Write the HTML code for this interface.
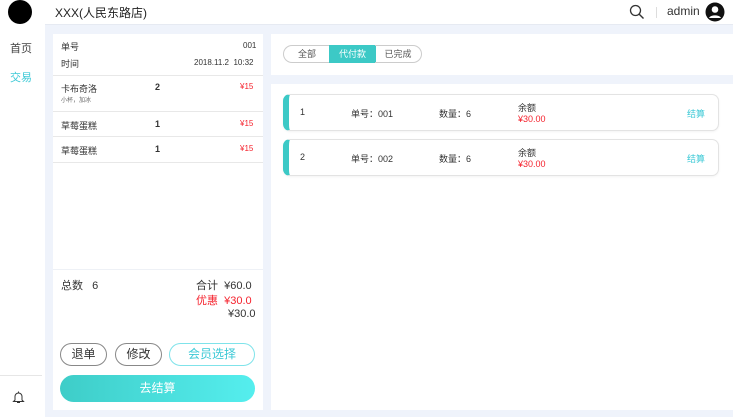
<!DOCTYPE html>
<html><head><meta charset="utf-8"><style>
*{margin:0;padding:0;box-sizing:border-box}
body{width:733px;height:417px;background:#eff3fb;font-family:"Liberation Sans","Noto Sans CJK SC",sans-serif;position:relative;overflow:hidden;color:#333}
.a{position:absolute}
.side{left:0;top:0;width:45px;height:417px;background:#fff}
.hdr{left:45px;top:0;width:688px;height:25px;background:#fff;border-bottom:1px solid #e6eaf2}
.lp{left:53px;top:34px;width:210px;height:376px;background:#fff}
.rt{left:271px;top:34px;width:462px;height:41px;background:#fff}
.rl{left:271px;top:84px;width:462px;height:326px;background:#fff}
.t{font-size:9px;white-space:nowrap}
.ln{height:1px;background:#e8e8e8}
.red{color:#f5222d}
.tab{top:45px;height:18px;font-size:9px;text-align:center;line-height:16px;border:1px solid #ccc;color:#555}
.card{left:283px;width:436px;height:37px;border:1px solid #e3e3e3;border-radius:7px;border-left:6px solid #3cc9c6;background:#fff;box-shadow:0 1px 2px rgba(0,0,0,.05)}
.btn{top:343px;height:23px;border:1px solid #888;border-radius:12px;text-align:center;line-height:21px;font-size:12px}
</style></head><body>
<div class="a side"></div>
<div class="a" style="left:8px;top:0;width:24px;height:24px;border-radius:50%;background:#000"></div>
<div class="a t" style="left:10px;top:40px;font-size:11px;color:#444">首页</div>
<div class="a t" style="left:10px;top:69px;font-size:11px;color:#3cc9d6">交易</div>
<div class="a" style="left:0;top:375px;width:42px;height:1px;background:#e6e6e6"></div>
<svg class="a" style="left:12px;top:390px" width="13" height="14" viewBox="0 0 13 14"><path d="M6.5 1.5v1M3 10V6.5a3.5 3.5 0 0 1 7 0V10l1.5 1.5h-10z M5 12.5h3" fill="none" stroke="#333" stroke-width="1"/></svg>
<div class="a hdr"></div>
<div class="a t" style="left:55px;top:4px;font-size:12px;color:#222">XXX(人民东路店)</div>
<svg class="a" style="left:629px;top:4px" width="16" height="16" viewBox="0 0 16 16"><circle cx="6.5" cy="6.5" r="5" fill="none" stroke="#333" stroke-width="1.3"/><path d="M10 10l4.5 4.5" stroke="#333" stroke-width="1.4"/></svg>
<div class="a" style="left:656px;top:7px;width:1px;height:11px;background:#ddd"></div>
<div class="a t" style="left:667px;top:4px;font-size:12px;color:#333">admin</div>
<svg class="a" style="left:705px;top:2px" width="20" height="20" viewBox="0 0 20 20"><circle cx="10" cy="10" r="9.5" fill="#111"/><circle cx="10" cy="7.5" r="3.3" fill="#fff"/><path d="M4 16c1.5-3.5 10.5-3.5 12 0" fill="#fff"/></svg>

<div class="a lp"></div>
<div class="a t" style="left:61px;top:40px">单号</div>
<div class="a t" style="left:243px;top:41px;font-size:8px">001</div>
<div class="a t" style="left:61px;top:57px">时间</div>
<div class="a t" style="left:194px;top:58px;font-size:8px">2018.11.2&nbsp; 10:32</div>
<div class="a ln" style="left:53px;top:75px;width:210px"></div>
<div class="a t" style="left:61px;top:82px">卡布奇洛</div>
<div class="a t" style="left:61px;top:95px;font-size:6px;color:#666">小杯，加冰</div>
<div class="a t" style="left:155px;top:82px;font-weight:bold">2</div>
<div class="a t red" style="left:240px;top:82px;font-size:8px">¥15</div>
<div class="a ln" style="left:53px;top:111px;width:210px"></div>
<div class="a t" style="left:61px;top:119px">草莓蛋糕</div>
<div class="a t" style="left:155px;top:119px;font-weight:bold">1</div>
<div class="a t red" style="left:240px;top:119px;font-size:8px">¥15</div>
<div class="a ln" style="left:53px;top:136px;width:210px"></div>
<div class="a t" style="left:61px;top:144px">草莓蛋糕</div>
<div class="a t" style="left:155px;top:144px;font-weight:bold">1</div>
<div class="a t red" style="left:240px;top:144px;font-size:8px">¥15</div>
<div class="a ln" style="left:53px;top:162px;width:210px"></div>
<div class="a ln" style="left:53px;top:269px;width:210px;background:#eef1f6"></div>
<div class="a t" style="left:61px;top:277px;font-size:11px">总数&nbsp;&nbsp; 6</div>
<div class="a t" style="left:196px;top:277px;font-size:11px">合计&nbsp; ¥60.0</div>
<div class="a t red" style="left:196px;top:292px;font-size:11px">优惠&nbsp; ¥30.0</div>
<div class="a t" style="left:228px;top:308px;font-size:11px">¥30.0</div>
<div class="a btn" style="left:60px;width:47px">退单</div>
<div class="a btn" style="left:115px;width:47px">修改</div>
<div class="a btn" style="left:169px;width:86px;border-color:#7fe3ea;color:#3cc9d6">会员选择</div>
<div class="a" style="left:60px;top:375px;width:195px;height:27px;border-radius:14px;background:linear-gradient(90deg,#3ecdc8,#55eeee);color:#fff;font-size:12px;text-align:center;line-height:27px">去结算</div>

<div class="a rt"></div>
<div class="a tab" style="left:283px;width:47px;border-radius:9px 0 0 9px;border-right:none">全部</div>
<div class="a tab" style="left:329px;width:47px;background:#3cc9c6;border-color:#3cc9c6;color:#fff">代付款</div>
<div class="a tab" style="left:375px;width:47px;border-radius:0 9px 9px 0;border-left:none">已完成</div>
<div class="a rl"></div>
<div class="a card" style="top:94px"></div>
<div class="a card" style="top:139px"></div>
<div class="a t" style="left:300px;top:107px">1</div>
<div class="a t" style="left:351px;top:107px">单号：001</div>
<div class="a t" style="left:439px;top:107px">数量：6</div>
<div class="a t" style="left:518px;top:101px">余额</div>
<div class="a t red" style="left:518px;top:114px">¥30.00</div>
<div class="a t" style="left:687px;top:107px;color:#3cc9d6">结算</div>
<div class="a t" style="left:300px;top:152px">2</div>
<div class="a t" style="left:351px;top:152px">单号：002</div>
<div class="a t" style="left:439px;top:152px">数量：6</div>
<div class="a t" style="left:518px;top:146px">余额</div>
<div class="a t red" style="left:518px;top:159px">¥30.00</div>
<div class="a t" style="left:687px;top:152px;color:#3cc9d6">结算</div>
</body></html>
